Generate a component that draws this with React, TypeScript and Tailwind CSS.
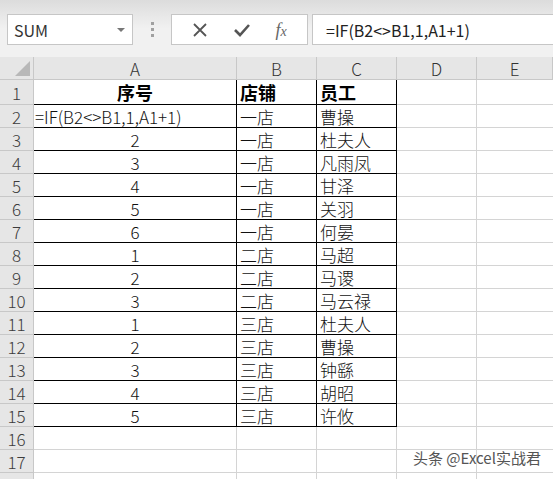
import React from 'react';

const rows: [string, string, string][] = [
  ['=IF(B2<>B1,1,A1+1)', '一店', '曹操'],
  ['2', '一店', '杜夫人'],
  ['3', '一店', '凡雨凤'],
  ['4', '一店', '甘泽'],
  ['5', '一店', '关羽'],
  ['6', '一店', '何晏'],
  ['1', '二店', '马超'],
  ['2', '二店', '马谡'],
  ['3', '二店', '马云禄'],
  ['1', '三店', '杜夫人'],
  ['2', '三店', '曹操'],
  ['3', '三店', '钟繇'],
  ['4', '三店', '胡昭'],
  ['5', '三店', '许攸'],
];

const font = { fontFamily: '"Noto Sans CJK SC", "Liberation Sans", sans-serif' };

function RowNum({ n, tall }: { n: number; tall?: boolean }) {
  return (
    <div
      className={`${tall ? 'h-[25px]' : 'h-[23px]'} flex items-center justify-center border-r border-b border-[#c8c8c8] bg-[#e6e6e6] text-[17px] leading-[17px] font-light text-[#3c3c3c]`}
    >
      {n}
    </div>
  );
}

export default function App() {
  return (
    <div className="w-[553px] h-[479px] overflow-hidden bg-white" style={font}>
      {/* formula bar */}
      <div className="h-[57px] bg-gradient-to-b from-[#dcdcdc] via-[#f1f1f1] to-[#f1f1f1] flex items-center pl-[7px] pt-[2px]">
        <div className="w-[126px] h-[31px] bg-white border border-[#c6c6c6] flex items-center justify-between px-[6px]">
          <span className="text-[16px] leading-none text-[#333]">SUM</span>
          <svg width="10" height="6" viewBox="0 0 10 6">
            <path d="M1 1 L5 5 L9 1 Z" fill="#777" />
          </svg>
        </div>
        <div className="w-[38px] flex flex-col items-center gap-[3px]">
          <span className="w-[3px] h-[3px] bg-[#a0a0a0]" />
          <span className="w-[3px] h-[3px] bg-[#a0a0a0]" />
          <span className="w-[3px] h-[3px] bg-[#a0a0a0]" />
        </div>
        <div className="w-[137px] h-[31px] bg-white border border-[#c6c6c6] flex items-center justify-around px-[8px]">
          <svg width="16" height="16" viewBox="0 0 16 16">
            <path d="M2 2 L14 14 M14 2 L2 14" stroke="#555" strokeWidth="1.8" />
          </svg>
          <svg width="18" height="16" viewBox="0 0 18 16">
            <path d="M2 8 L7 13 L16 3" stroke="#555" strokeWidth="2.6" fill="none" />
          </svg>
          <span className="text-[18px] leading-none italic text-[#666]" style={{ fontFamily: '"Liberation Serif", serif' }}>
            f<span className="text-[14px]">x</span>
          </span>
        </div>
        <div className="ml-[4px] flex-1 h-[31px] bg-white border border-[#c6c6c6] border-r-0 flex items-center pl-[13px] text-[16px] leading-none text-[#222]">
          =IF(B2&lt;&gt;B1,1,A1+1)
        </div>
      </div>

      {/* grid */}
      <div className="relative grid grid-cols-[34px_203px_80px_80px_80px_1fr]">
        {/* column headers */}
        <div className="h-[23px] border-r border-b border-[#c8c8c8] bg-[#e6e6e6] flex items-end justify-end pr-[3px] pb-[3px]">
          <svg width="15" height="15" viewBox="0 0 15 15">
            <path d="M15 0 L15 15 L0 15 Z" fill="#b8b8b8" />
          </svg>
        </div>
        {['A', 'B', 'C', 'D', 'E'].map((c) => (
          <div
            key={c}
            className="h-[23px] border-r border-b border-[#c8c8c8] bg-[#e6e6e6] flex items-center justify-center text-[17px] leading-none font-light text-[#333]"
          >
            {c}
          </div>
        ))}

        {/* row 1 */}
        <RowNum n={1} tall />
        <div className="h-[25px] border-r border-b border-black flex items-center justify-center text-[18px] leading-none font-bold text-black">序号</div>
        <div className="h-[25px] border-r border-b border-black flex items-center pl-[3px] text-[18px] leading-none font-bold text-black">店铺</div>
        <div className="h-[25px] border-r border-b border-black flex items-center pl-[3px] text-[18px] leading-none font-bold text-black">员工</div>
        <div className="h-[25px] border-r border-b border-[#d4d4d4]" />
        <div className="h-[25px] border-b border-[#d4d4d4]" />

        {rows.map((r, i) => (
          <React.Fragment key={i}>
            <RowNum n={i + 2} />
            <div
              className={`h-[23px] border-r border-b border-black flex items-center text-[17px] leading-none font-light text-[#111] whitespace-nowrap ${
                i === 0 ? 'pl-[1px]' : 'justify-center'
              }`}
            >
              {r[0]}
            </div>
            <div className="h-[23px] border-r border-b border-black flex items-center pl-[3px] text-[17px] leading-none font-light text-[#111]">{r[1]}</div>
            <div className="h-[23px] border-r border-b border-black flex items-center pl-[3px] text-[17px] leading-none font-light text-[#111]">{r[2]}</div>
            <div className="h-[23px] border-r border-b border-[#d4d4d4]" />
            <div className="h-[23px] border-b border-[#d4d4d4]" />
          </React.Fragment>
        ))}

        {[16, 17, 18].map((n) => (
          <React.Fragment key={n}>
            <RowNum n={n} />
            <div className="h-[23px] border-r border-b border-[#d4d4d4]" />
            <div className="h-[23px] border-r border-b border-[#d4d4d4]" />
            <div className="h-[23px] border-r border-b border-[#d4d4d4]" />
            <div className="h-[23px] border-r border-b border-[#d4d4d4]" />
            <div className="h-[23px] border-b border-[#d4d4d4]" />
          </React.Fragment>
        ))}

        {/* watermark */}
        <div className="absolute left-[413px] top-[393px] text-[15px] leading-none text-[#555] whitespace-nowrap">
          头条 @Excel实战君
        </div>
      </div>
    </div>
  );
}
